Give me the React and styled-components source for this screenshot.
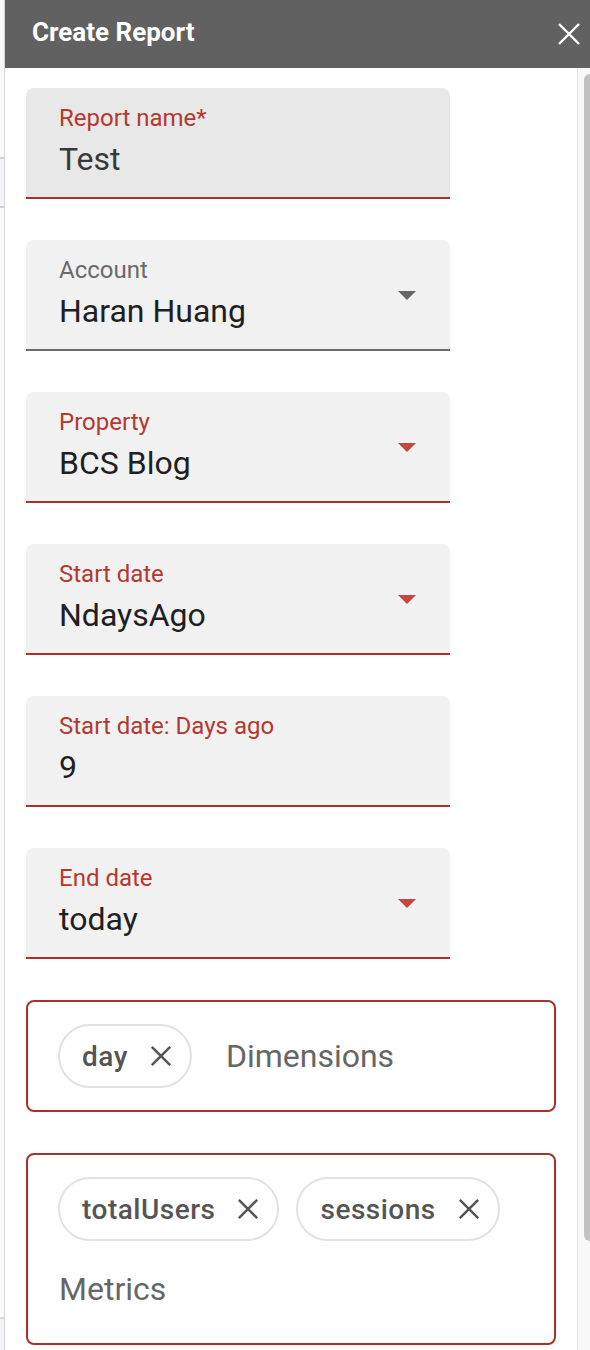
import React from "react";
import styled, { createGlobalStyle } from "styled-components";

const RED_TEXT = "#b3392f";
const RED_LINE = "#a8322b";
const RED_ARROW = "#c4463c";
const FONT = `Roboto, "Liberation Sans", Arial, sans-serif`;

const GlobalStyle = createGlobalStyle`
  html, body {
    margin: 0;
    padding: 0;
    overflow: hidden;
    background: #ffffff;
    font-family: ${FONT};
  }
`;

const fields = [
  { label: "Report name*", value: "Test", active: true, hover: true },
  { label: "Account", value: "Haran Huang", select: true },
  { label: "Property", value: "BCS Blog", active: true, select: true },
  { label: "Start date", value: "NdaysAgo", active: true, select: true },
  { label: "Start date: Days ago", value: "9", active: true },
  { label: "End date", value: "today", active: true, select: true },
];

const CloseIcon = ({ size = 24, color = "#fff", stroke = 2.4 }) => (
  <svg width={size} height={size} viewBox="0 0 24 24">
    <path
      d="M2 2 L22 22 M22 2 L2 22"
      stroke={color}
      strokeWidth={stroke}
      strokeLinecap="butt"
      fill="none"
    />
  </svg>
);

const SelectField = ({ label, value, active, hover, select }) => (
  <Field $active={active} $hover={hover}>
    <FieldText>
      <Label $active={active}>{label}</Label>
      <Value $dim={hover}>{value}</Value>
    </FieldText>
    {select && <Arrow $active={active} />}
  </Field>
);

const ChipInput = ({ chips, placeholder, inline }) => (
  <ChipBox>
    {chips.map((c) => (
      <Chip key={c}>
        {c}
        <CloseIcon size={22} color="#555" stroke={2.7} />
      </Chip>
    ))}
    <Placeholder $inline={inline}>{placeholder}</Placeholder>
  </ChipBox>
);

const App = () => {
  return (
    <>
      <GlobalStyle />
      <Page>
        <Backdrop />
        <Panel>
          <Header>
            <Title>Create Report</Title>
            <CloseIcon />
          </Header>
          <Body>
            <Content>
              {fields.map((f) => (
                <SelectField key={f.label} {...f} />
              ))}
              <ChipInput chips={["day"]} placeholder="Dimensions" inline />
              <ChipInput
                chips={["totalUsers", "sessions"]}
                placeholder="Metrics"
              />
            </Content>
            <ScrollTrack>
              <ScrollThumb />
            </ScrollTrack>
          </Body>
        </Panel>
      </Page>
    </>
  );
};

export default App;

const Page = styled.div`
  display: flex;
  width: 590px;
  height: 1350px;
  overflow: hidden;
`;

const Backdrop = styled.div`
  width: 4px;
  flex-shrink: 0;
  border-right: 1px solid #d6d6d6;
  background: linear-gradient(
    to bottom,
    #fafafa 0,
    #fafafa 157px,
    #d0d0d0 157px,
    #d0d0d0 159px,
    #f3f3f8 159px,
    #f3f3f8 206px,
    #d0d0d0 206px,
    #d0d0d0 208px,
    #fafafa 208px,
    #fafafa 1317px,
    #d8d8d8 1317px,
    #d8d8d8 1319px,
    #f3f3f8 1319px
  );
`;

const Panel = styled.div`
  flex: 1;
  display: flex;
  flex-direction: column;
  min-width: 0;
`;

const Header = styled.div`
  height: 68px;
  flex-shrink: 0;
  background: #616161;
  display: flex;
  align-items: center;
  justify-content: space-between;
  padding: 0 9px 0 27px;
  box-sizing: border-box;
`;

const Title = styled.div`
  color: #ffffff;
  font-family: ${FONT};
  font-weight: 700;
  font-size: 26px;
  margin-top: -4px;
`;

const Body = styled.div`
  flex: 1;
  display: flex;
  min-height: 0;
`;

const Content = styled.div`
  flex: 1;
  display: flex;
  flex-direction: column;
  gap: 41px;
  padding: 20px 0 0 21px;
  background: #ffffff;
`;

const Field = styled.div`
  width: 424px;
  height: 111px;
  flex-shrink: 0;
  box-sizing: border-box;
  display: flex;
  align-items: center;
  justify-content: space-between;
  padding: 0 34px 0 33px;
  background: ${(p) => (p.$hover ? "#e8e8e9" : "#f1f1f2")};
  border-radius: 8px 8px 0 0;
  border-bottom: 2px solid ${(p) => (p.$active ? RED_LINE : "#6b6b6b")};
`;

const FieldText = styled.div`
  align-self: flex-start;
  display: flex;
  flex-direction: column;
  padding-top: 16px;
`;

const Label = styled.div`
  font-family: ${FONT};
  font-size: 24px;
  line-height: 28px;
  color: ${(p) => (p.$active ? RED_TEXT : "#6a6a6a")};
`;

const Value = styled.div`
  font-family: ${FONT};
  font-size: 32px;
  line-height: 40px;
  margin-top: 7px;
  color: ${(p) => (p.$dim ? "#383838" : "#1f1f1f")};
`;

const Arrow = styled.div`
  width: 0;
  height: 0;
  border-left: 9px solid transparent;
  border-right: 9px solid transparent;
  border-top: 9px solid ${(p) => (p.$active ? RED_ARROW : "#666666")};
  margin-top: 2px;
`;

const ChipBox = styled.div`
  width: 530px;
  flex-shrink: 0;
  box-sizing: border-box;
  border: 2px solid ${RED_LINE};
  border-radius: 8px;
  padding: 22px 30px;
  display: flex;
  flex-wrap: wrap;
  align-items: center;
  gap: 16px 17px;
`;

const Chip = styled.span`
  display: inline-flex;
  align-items: center;
  gap: 22px;
  height: 64px;
  box-sizing: border-box;
  padding: 0 18px 0 22px;
  border: 2px solid #e2e2e2;
  border-radius: 32px;
  font-family: ${FONT};
  font-weight: 500;
  font-size: 28px;
  letter-spacing: 0.5px;
  color: #555555;
`;

const Placeholder = styled.div`
  flex: 1;
  min-width: 160px;
  height: 64px;
  line-height: 64px;
  padding-left: ${(p) => (p.$inline ? "17px" : "1px")};
  font-family: ${FONT};
  font-size: 32px;
  color: #666666;
`;

const ScrollTrack = styled.div`
  width: 13px;
  flex-shrink: 0;
  border-left: 1px solid #e4e4e4;
  background: #f8f8f8;
  padding-top: 6px;
  box-sizing: border-box;
`;

const ScrollThumb = styled.div`
  width: 6px;
  height: 1167px;
  margin-left: 6px;
  background: #c1c1c1;
  border-radius: 6px 0 0 6px;
`;
